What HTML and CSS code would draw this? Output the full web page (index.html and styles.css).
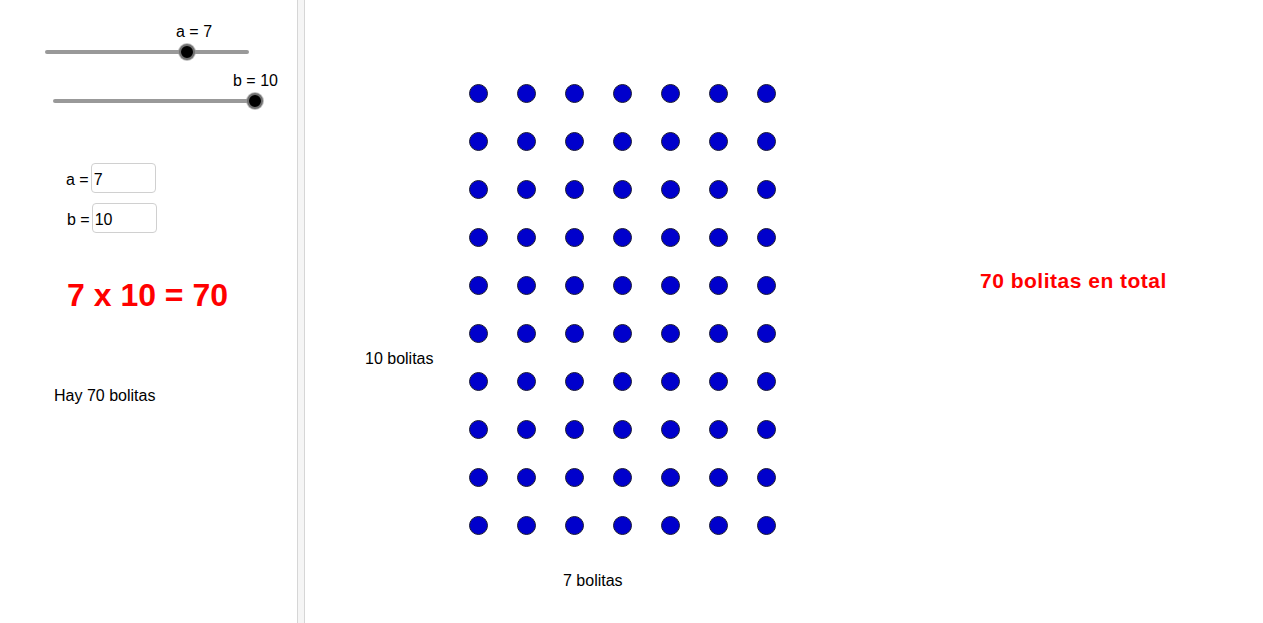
FILE: index.html
```html
<!DOCTYPE html>
<html lang="es">
<head>
<meta charset="utf-8">
<title>Bolitas</title>
<link rel="stylesheet" href="styles.css">
</head>
<body>
<div class="applet">
  <div class="algebra">
    <div class="slider slider-a">
      <div class="slider-label">a = 7</div>
      <div class="track"><span class="knob" style="left:134px"></span></div>
    </div>
    <div class="slider slider-b">
      <div class="slider-label">b = 10</div>
      <div class="track"><span class="knob" style="left:194px"></span></div>
    </div>
    <div class="field field-a">
      <label for="in-a">a =</label>
      <input id="in-a" class="box" type="text" value="7">
    </div>
    <div class="field field-b">
      <label for="in-b">b =</label>
      <input id="in-b" class="box" type="text" value="10">
    </div>
    <div class="equation">7 x 10 = 70</div>
    <div class="hay">Hay 70 bolitas</div>
  </div>
  <div class="divider"></div>
  <div class="graphics">
    <div class="dots">
      <span class="dot"></span><span class="dot"></span><span class="dot"></span><span class="dot"></span><span class="dot"></span><span class="dot"></span><span class="dot"></span>
      <span class="dot"></span><span class="dot"></span><span class="dot"></span><span class="dot"></span><span class="dot"></span><span class="dot"></span><span class="dot"></span>
      <span class="dot"></span><span class="dot"></span><span class="dot"></span><span class="dot"></span><span class="dot"></span><span class="dot"></span><span class="dot"></span>
      <span class="dot"></span><span class="dot"></span><span class="dot"></span><span class="dot"></span><span class="dot"></span><span class="dot"></span><span class="dot"></span>
      <span class="dot"></span><span class="dot"></span><span class="dot"></span><span class="dot"></span><span class="dot"></span><span class="dot"></span><span class="dot"></span>
      <span class="dot"></span><span class="dot"></span><span class="dot"></span><span class="dot"></span><span class="dot"></span><span class="dot"></span><span class="dot"></span>
      <span class="dot"></span><span class="dot"></span><span class="dot"></span><span class="dot"></span><span class="dot"></span><span class="dot"></span><span class="dot"></span>
      <span class="dot"></span><span class="dot"></span><span class="dot"></span><span class="dot"></span><span class="dot"></span><span class="dot"></span><span class="dot"></span>
      <span class="dot"></span><span class="dot"></span><span class="dot"></span><span class="dot"></span><span class="dot"></span><span class="dot"></span><span class="dot"></span>
      <span class="dot"></span><span class="dot"></span><span class="dot"></span><span class="dot"></span><span class="dot"></span><span class="dot"></span><span class="dot"></span>
    </div>
    <div class="canvas-label label-rows">10 bolitas</div>
    <div class="canvas-label label-cols">7 bolitas</div>
    <div class="canvas-label label-total">70 bolitas en total</div>
  </div>
</div>
</body>
</html>
```

FILE: styles.css
```css
* {
  box-sizing: border-box;
}

html, body {
  margin: 0;
  padding: 0;
  height: 623px;
  overflow: hidden;
  background: #fff;
}

body {
  font-family: "Liberation Sans", Arial, sans-serif;
  font-size: 16px;
  color: #000;
}

.applet {
  display: flex;
  height: 623px;
}

/* ---------- left panel ---------- */
.algebra {
  width: 297px;
  flex: none;
  padding-top: 23px;
}

.slider-label {
  line-height: 18px;
  white-space: nowrap;
}

.track {
  position: relative;
  width: 204px;
  height: 4px;
  border-radius: 2px;
  background: #999;
}

.knob {
  position: absolute;
  top: -6px;
  width: 16px;
  height: 16px;
  border-radius: 50%;
  background: #000;
  border: 2px solid #707070;
  box-shadow: 0 0 0 1px rgba(150, 150, 150, 0.6);
}

.slider-a .slider-label {
  margin-left: 176px;
}

.slider-a .track {
  margin-top: 9px;
  margin-left: 45px;
}

.slider-b .slider-label {
  margin-top: 18px;
  margin-left: 233px;
}

.slider-b .track {
  margin-top: 9px;
  margin-left: 53px;
}

.field {
  display: flex;
  align-items: center;
  gap: 2px;
  height: 30px;
}

.field label {
  padding-top: 3px;
  line-height: 18px;
  white-space: nowrap;
}

.field-a {
  margin-top: 60px;
  margin-left: 66px;
}

.field-b {
  margin-top: 10px;
  margin-left: 67px;
}

.box {
  width: 65px;
  height: 30px;
  margin: 0;
  padding: 3px 2px 0;
  border: 1px solid #d0d0d0;
  border-radius: 4px;
  font: 16px "Liberation Sans", Arial, sans-serif;
  color: #000;
  background: #fff;
  outline: none;
}

.equation {
  margin-top: 44px;
  margin-left: 67px;
  font-size: 32px;
  font-weight: bold;
  line-height: 37px;
  color: #ff0000;
  white-space: nowrap;
}

.hay {
  margin-top: 73px;
  margin-left: 54px;
  line-height: 18px;
}

/* ---------- divider ---------- */
.divider {
  width: 8px;
  flex: none;
  background: #f5f5f5;
  border-left: 1px solid #d6d6d6;
  border-right: 1px solid #d6d6d6;
}

/* ---------- graphics view ---------- */
.graphics {
  position: relative;
  flex: 1;
  padding: 84px 0 0 164px;
}

.dots {
  display: grid;
  grid-template-columns: repeat(7, 19px);
  grid-auto-rows: 19px;
  gap: 29px;
}

.dot {
  display: block;
  width: 19px;
  height: 19px;
  border-radius: 50%;
  background: #0000cc;
  border: 1px solid #1a1a33;
}

.canvas-label {
  position: absolute;
  line-height: 18px;
  white-space: nowrap;
}

.label-rows {
  left: 60px;
  top: 350px;
}

.label-cols {
  left: 258px;
  top: 572px;
}

.label-total {
  left: 675px;
  top: 269px;
  font-size: 21px;
  font-weight: bold;
  line-height: 24px;
  letter-spacing: 0.5px;
  color: #ff0000;
}
```
